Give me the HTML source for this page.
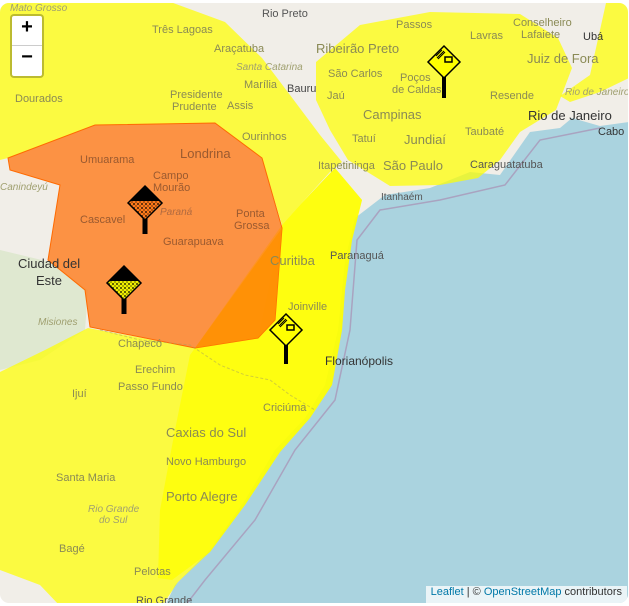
<!DOCTYPE html>
<html><head><meta charset="utf-8"><style>
html,body{margin:0;padding:0;background:#fff;width:629px;height:606px;overflow:hidden}
#map{position:absolute;left:0;top:3px;width:628px;height:600px;border-radius:9px;overflow:hidden;background:#f1eee8}
svg{position:absolute;left:0;top:0}
.t{font-family:"Liberation Sans","DejaVu Sans",sans-serif;font-size:11px;fill:#8a8a55}
.b{font-size:13px}
.i{font-style:italic;fill:#a0a070;font-size:10px}
.ctl{position:absolute;left:10px;top:11px;width:30px;height:60px;background:#fff;border:2px solid rgba(0,0,0,.25);border-radius:4px;background-clip:padding-box}
.ctl div{height:30px;line-height:30px;text-align:center;font:bold 20px "Liberation Sans",sans-serif;color:#000}
.ctl div:first-child{border-bottom:1px solid #ccc;height:29px}
.attr{position:absolute;right:1px;bottom:0;height:17px;line-height:17px;padding:0 5px;background:rgba(255,255,255,.75);font:11px "Liberation Sans",sans-serif;color:#333}
.attr a{color:#0078a8;text-decoration:none}
</style></head><body>
<div id="map">
<svg width="628" height="600" viewBox="0 3 628 600">
<defs>
<pattern id="dots" width="4" height="4" patternUnits="userSpaceOnUse"><circle cx="1" cy="1" r="0.9" fill="#000"/><circle cx="3" cy="3" r="0.6" fill="#000"/></pattern>
</defs>
<!-- water -->
<path d="M629,122 L600,126 L572,118 L560,128 L530,132 L500,175 L470,172 L430,188 L385,195 L355,218 L345,260 L338,330 L325,385 L305,418 L275,450 L245,500 L210,550 L175,585 L165,606 L629,606 Z" fill="#aad3df"/>
<path d="M600,128 L540,140 L505,185 L440,200 L380,210 L357,240 L350,330 L335,400 L295,450 L255,520 L205,580 L185,606" fill="none" stroke="#a9a3c0" stroke-width="1.5"/>
<!-- greenish land left -->
<path d="M0,250 L50,262 L88,290 L85,330 L40,360 L0,370 Z" fill="#dfe8d0"/>
<!-- yellow NW -->
<path d="M0,0 L165,0 L225,22 L262,58 L290,95 L320,135 L342,162 L330,172 L300,205 L282,225 L262,158 L215,123 L95,125 L8,158 L0,160 Z" fill="#ffff00" fill-opacity="0.72"/>
<!-- yellow NE -->
<path d="M316,62 L360,25 L430,12 L520,14 L558,38 L572,68 L556,110 L520,132 L500,160 L478,178 L440,185 L390,186 L348,160 L330,130 L316,100 Z" fill="#ffff00" fill-opacity="0.72"/>
<path d="M606,3 L629,3 L629,78 L600,92 L570,102 L560,96 L590,75 Z" fill="#ffff00" fill-opacity="0.72"/>
<!-- yellow south -->
<path d="M0,372 L45,350 L88,328 L195,348 L258,338 L282,225 L300,205 L335,168 L362,200 L352,240 L345,290 L342,330 L332,385 L310,418 L280,452 L245,505 L210,552 L178,582 L162,606 L60,606 L40,585 L0,570 Z" fill="#ffff00" fill-opacity="0.72"/>
<!-- bright overlap SC -->
<path d="M195,348 L282,225 L300,205 L335,168 L362,200 L352,240 L345,290 L342,330 L332,385 L310,418 L280,452 L245,505 L210,552 L172,580 L158,578 L160,510 L175,430 L190,355 Z" fill="#ffff00" fill-opacity="0.75"/>
<!-- orange -->
<path d="M8,158 L95,125 L215,123 L262,158 L282,228 L275,320 L258,338 L195,348 L90,327 L85,290 L48,260 L60,185 L10,170 Z" fill="#ff7a1a" fill-opacity="0.8" stroke="#ff6a00" stroke-width="1"/>
<path d="M195,348 L282,228 L275,320 L258,338 Z" fill="#ff9000" fill-opacity="0.8"/>
<!-- border line -->
<path d="M100,330 L140,340 L190,345 L220,365 L245,375 L270,380 L290,395 L315,410" fill="none" stroke="#a6a060" stroke-width="1" stroke-dasharray="3,2" opacity=".5"/>
<!-- labels -->
<text class="t" x="262" y="17" font-size="12" style="fill:#555">Rio Preto</text>
<text class="t" x="152" y="33">Três Lagoas</text>
<text class="t" x="214" y="52">Araçatuba</text>
<text class="t" x="244" y="88">Marília</text>
<text class="t" x="287" y="92" style="fill:#444">Bauru</text>
<text class="t" x="170" y="98">Presidente</text>
<text class="t" x="172" y="110">Prudente</text>
<text class="t" x="227" y="109">Assis</text>
<text class="t" x="15" y="102">Dourados</text>
<text class="t" x="242" y="140">Ourinhos</text>
<text class="t b" x="180" y="158" style="fill:#9a5a30">Londrina</text>
<text class="t" x="80" y="163" style="fill:#9a5a30">Umuarama</text>
<text class="t" x="153" y="179" style="fill:#9a5a30">Campo</text>
<text class="t" x="153" y="191" style="fill:#9a5a30">Mourão</text>
<text class="t" x="80" y="223" style="fill:#9a5a30">Cascavel</text>
<text class="t" x="236" y="217" style="fill:#9a5a30">Ponta</text>
<text class="t" x="234" y="229" style="fill:#9a5a30">Grossa</text>
<text class="t" x="163" y="245" style="fill:#9a5a30">Guarapuava</text>
<text class="t b" x="18" y="268" style="fill:#333">Ciudad del</text>
<text class="t b" x="36" y="285" style="fill:#333">Este</text>
<text class="t b" x="270" y="265">Curitiba</text>
<text class="t" x="330" y="259" style="fill:#555">Paranaguá</text>
<text class="t" x="288" y="310">Joinville</text>
<text class="t" x="325" y="365" style="fill:#333;font-size:12px">Florianópolis</text>
<text class="t i" x="38" y="325">Misiones</text>
<text class="t" x="118" y="347">Chapecó</text>
<text class="t" x="135" y="373">Erechim</text>
<text class="t" x="118" y="390">Passo Fundo</text>
<text class="t" x="72" y="397">Ijuí</text>
<text class="t b" x="166" y="437">Caxias do Sul</text>
<text class="t" x="166" y="465">Novo Hamburgo</text>
<text class="t b" x="166" y="501">Porto Alegre</text>
<text class="t" x="56" y="481">Santa Maria</text>
<text class="t i" x="88" y="512">Rio Grande</text>
<text class="t i" x="99" y="523">do Sul</text>
<text class="t" x="59" y="552">Bagé</text>
<text class="t" x="134" y="575">Pelotas</text>
<text class="t" x="136" y="604" style="fill:#555">Rio Grande</text>
<text class="t" x="263" y="411">Criciúma</text>
<text class="t b" x="316" y="53">Ribeirão Preto</text>
<text class="t" x="328" y="77">São Carlos</text>
<text class="t" x="327" y="99">Jaú</text>
<text class="t" x="400" y="81">Poços</text>
<text class="t" x="392" y="93">de Caldas</text>
<text class="t b" x="363" y="119">Campinas</text>
<text class="t b" x="404" y="144">Jundiaí</text>
<text class="t" x="352" y="142">Tatuí</text>
<text class="t b" x="383" y="170">São Paulo</text>
<text class="t" x="318" y="169">Itapetininga</text>
<text class="t" x="381" y="200" style="fill:#555;font-size:10px">Itanhaém</text>
<text class="t" x="470" y="168" style="fill:#555">Caraguatatuba</text>
<text class="t" x="465" y="135">Taubaté</text>
<text class="t" x="490" y="99">Resende</text>
<text class="t" x="396" y="28">Passos</text>
<text class="t" x="470" y="39">Lavras</text>
<text class="t" x="513" y="26">Conselheiro</text>
<text class="t" x="521" y="38">Lafaiete</text>
<text class="t" x="583" y="40" style="fill:#333">Ubá</text>
<text class="t b" x="527" y="63">Juiz de Fora</text>
<text class="t b" x="528" y="120" style="fill:#333">Rio de Janeiro</text>
<text class="t" x="598" y="135" style="fill:#333">Cabo F</text>
<text class="t i" x="565" y="95">Rio de Janeiro</text>
<text class="t i" x="160" y="215" style="fill:#b06a40">Paraná</text>
<text class="t i" x="236" y="70">Santa Catarina</text>
<text class="t i" x="0" y="190">Canindeyú</text>
<text class="t i" x="10" y="11">Mato Grosso</text>
<!-- warning icons -->
<g transform="translate(145,203)">
<rect x="-2.5" y="0" width="5" height="31" fill="#000"/>
<path d="M0,-17 L17,0 L0,17 L-17,0Z" fill="#ff7a1a"/>
<path d="M0,-17 L17,0 L0,17 L-17,0Z" fill="url(#dots)"/>
<path d="M0,-17 L15,-2 L-15,-2Z" fill="#000"/>
<path d="M0,-17 L17,0 L0,17 L-17,0Z" fill="none" stroke="#000" stroke-width="1.5"/>
</g>
<g transform="translate(124,283)">
<rect x="-2.5" y="0" width="5" height="31" fill="#000"/>
<path d="M0,-17 L17,0 L0,17 L-17,0Z" fill="#eeee00"/>
<path d="M0,-17 L17,0 L0,17 L-17,0Z" fill="url(#dots)"/>
<path d="M0,-17 L15,-2 L-15,-2Z" fill="#000"/>
<path d="M0,-17 L17,0 L0,17 L-17,0Z" fill="none" stroke="#000" stroke-width="1.5"/>
</g>
<g transform="translate(286,330)">
<rect x="-2" y="0" width="4" height="34" fill="#000"/>
<path d="M0,-16 L16,0 L0,16 L-16,0Z" fill="#ffff00" stroke="#000" stroke-width="1.5"/>
<path d="M-8,-6 L-2,-12 M-7,-4 L0,-11 M-6,-3 L1,-10" stroke="#000" stroke-width="1"/>
<rect x="1" y="-5" width="7" height="5" fill="none" stroke="#000" stroke-width="1.5"/>
</g>
<g transform="translate(444,62)">
<rect x="-2" y="0" width="4" height="36" fill="#000"/>
<path d="M0,-16 L16,0 L0,16 L-16,0Z" fill="#ffff00" stroke="#000" stroke-width="1.5"/>
<path d="M-8,-6 L-2,-12 M-7,-4 L0,-11 M-6,-3 L1,-10" stroke="#000" stroke-width="1"/>
<rect x="1" y="-5" width="7" height="5" fill="none" stroke="#000" stroke-width="1.5"/>
</g>
</svg>
<div class="ctl"><div>+</div><div>−</div></div>
<div class="attr"><a>Leaflet</a> | © <a>OpenStreetMap</a> contributors</div>
</div>
</body></html>
